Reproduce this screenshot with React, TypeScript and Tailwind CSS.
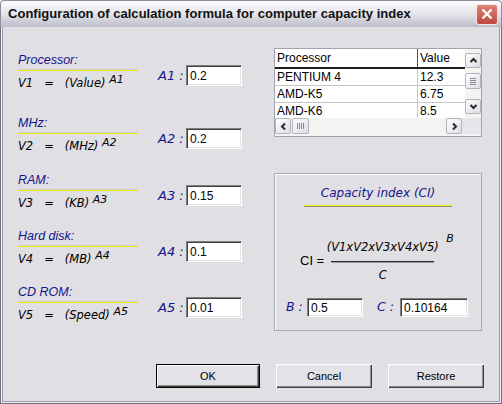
import React from 'react';

const sans = "font-['Liberation_Sans',Arial,sans-serif]";
const dv = "font-['DejaVu_Sans',Verdana,sans-serif]";

const editCls =
  'bg-white border border-t-[#7f7f7f] border-l-[#7f7f7f] border-b-white border-r-white shadow-[inset_1px_1px_0_#404040,inset_-1px_-1px_0_#e6e4dc] flex items-center pl-[3px] text-[12px] text-black ' +
  sans;

type Row = { head: string; formula: string; exp: string; value: string; mt: string };

const rows: Row[] = [
  { head: 'Processor:', formula: 'V1   =   (Value)', exp: 'A1', value: '0.2', mt: 'mt-0' },
  { head: 'MHz:', formula: 'V2   =   (MHz)', exp: 'A2', value: '0.2', mt: 'mt-[25px]' },
  { head: 'RAM:', formula: 'V3   =   (KB)', exp: 'A3', value: '0.15', mt: 'mt-[19px]' },
  { head: 'Hard disk:', formula: 'V4   =   (MB)', exp: 'A4', value: '0.1', mt: 'mt-[18px]' },
  { head: 'CD ROM:', formula: 'V5   =   (Speed)', exp: 'A5', value: '0.01', mt: 'mt-[18px]' },
];

const cpus = [
  { name: 'PENTIUM 4', value: '12.3' },
  { name: 'AMD-K5', value: '6.75' },
  { name: 'AMD-K6', value: '8.5' },
];

function Chevron({ dir }: { dir: 'up' | 'down' | 'left' | 'right' }) {
  const pts: Record<string, string> = {
    up: '1.5,6 4.5,3 7.5,6',
    down: '1.5,3 4.5,6 7.5,3',
    left: '6,1.5 3,4.5 6,7.5',
    right: '3,1.5 6,4.5 3,7.5',
  };
  return (
    <svg width="9" height="9" viewBox="0 0 9 9">
      <polyline points={pts[dir]} fill="none" stroke="#2a2a2a" strokeWidth="2" />
    </svg>
  );
}

const sbBtn =
  'flex items-center justify-center rounded-[2px] border border-[#b3b3bd] bg-gradient-to-br from-white to-[#dcdce4]';

function Button({ label, def }: { label: string; def?: boolean }) {
  return (
    <button
      className={
        'h-[24px] flex items-center justify-center bg-[#e3e2e6] text-[11px] text-black ' +
        sans +
        (def
          ? ' w-[104px] border border-black shadow-[inset_1px_1px_0_#fff,inset_-1px_-1px_0_#404040,inset_-2px_-2px_0_#8a8a8a]'
          : ' w-[96px] shadow-[inset_1px_1px_0_#fff,inset_-1px_-1px_0_#404040,inset_-2px_-2px_0_#8a8a8a]')
      }
    >
      {label}
    </button>
  );
}

export default function App() {
  return (
    <div className="w-[502px] h-[404px] flex flex-col select-none">
      {/* Title bar */}
      <div className="h-[27px] flex items-center justify-between pl-[7px] pr-[3px] border border-b-0 border-[#8d8d9c] rounded-t-[4px] bg-gradient-to-b from-[#fdfdfe] via-[#e4e4ea] to-[#bdbdca]">
        <span className={'text-[13px] font-bold text-[#111] tracking-[0.03px] ' + sans}>
          Configuration of calculation formula for computer capacity index
        </span>
        <div className="w-[22px] h-[21px] rounded-[3px] border border-[#f4e6e4] bg-gradient-to-b from-[#dd8277] to-[#c0473c] flex items-center justify-center">
          <svg width="12" height="12" viewBox="0 0 12 12">
            <path d="M1.5 1.5 L10.5 10.5 M10.5 1.5 L1.5 10.5" stroke="#fff" strokeWidth="2.3" />
          </svg>
        </div>
      </div>

      {/* Frame */}
      <div className="flex-1 flex flex-col border border-t-0 border-[#6f6f80] px-px pb-px bg-[#f0f0f4]">
        <div className="flex-1 flex flex-col border border-t-0 border-[#9c9cab] bg-[#e0dfe3] pt-[21px] px-[15px]">
          <div className="flex">
            {/* Left column */}
            <div className="w-[224px] mt-[4px] flex flex-col">
              {rows.map((r) => (
                <div key={r.exp} className={'flex items-start h-[38px] ' + r.mt}>
                  <div className="w-[120px] flex flex-col">
                    <div className={'h-[16px] leading-[16px] italic text-[12.5px] text-[#14148a] ' + sans}>
                      {r.head}
                    </div>
                    <div className="mt-px h-[2px] border-t border-[#cfcfcf] bg-[#f2f200] box-border" />
                    <div className={'mt-[5px] h-[14px] leading-[14px] italic text-[11.5px] text-black whitespace-pre ' + dv}>
                      {r.formula}{' '}
                      <span className="relative -top-[4px] text-[11px]">{r.exp}</span>
                    </div>
                  </div>
                  <div className="ml-[20px] mt-[13px] flex items-center h-[21px]">
                    <span className={'w-[28px] italic text-[13px] text-[#14148a] ' + dv}>
                      {r.exp} :
                    </span>
                    <div className={'w-[56px] h-[21px] ' + editCls}>{r.value}</div>
                  </div>
                </div>
              ))}
            </div>

            {/* Right column */}
            <div className="ml-[32px] w-[208px] flex flex-col">
              {/* Table */}
              <div className="h-[89px] border border-[#a3a3ae] bg-[#f4f4f6] flex flex-col">
                <div className="flex h-[69px] bg-white">
                  <div className={'w-[190px] flex flex-col text-[12px] text-black overflow-hidden ' + sans}>
                    <div className="flex h-[20px] border-b-2 border-[#1e1e1e] shrink-0">
                      <div className="w-[143px] pl-[2px] leading-[18px] border-r border-[#505050]">Processor</div>
                      <div className="w-[47px] pl-[2px] leading-[18px]">Value</div>
                    </div>
                    {cpus.map((c) => (
                      <div key={c.name} className="flex h-[17px] border-b border-[#c6c6c6] shrink-0">
                        <div className="w-[143px] pl-[2px] leading-[17px] border-r border-[#c6c6c6]">{c.name}</div>
                        <div className="w-[47px] pl-[2px] leading-[17px]">{c.value}</div>
                      </div>
                    ))}
                  </div>
                  <div className="w-[16px] flex flex-col bg-[#f3f3f1] py-[4px]">
                    <div className={'h-[15px] ' + sbBtn}>
                      <Chevron dir="up" />
                    </div>
                    <div className={'mt-[5px] h-[16px] ' + sbBtn}>
                      <div className="flex flex-col gap-px">
                        <div className="w-[6px] h-px bg-[#8a8a94]" />
                        <div className="w-[6px] h-px bg-[#8a8a94]" />
                        <div className="w-[6px] h-px bg-[#8a8a94]" />
                        <div className="w-[6px] h-px bg-[#8a8a94]" />
                      </div>
                    </div>
                    <div className="flex-1" />
                    <div className={'h-[15px] ' + sbBtn}>
                      <Chevron dir="down" />
                    </div>
                  </div>
                </div>
                <div className="flex h-[16px] bg-[#f3f3f1]">
                  <div className="w-[187px] flex">
                    <div className={'w-[16px] h-[16px] ' + sbBtn}>
                      <Chevron dir="left" />
                    </div>
                    <div className={'ml-px w-[17px] h-[16px] ' + sbBtn}>
                      <div className="flex gap-px">
                        <div className="w-px h-[6px] bg-[#8a8a94]" />
                        <div className="w-px h-[6px] bg-[#8a8a94]" />
                        <div className="w-px h-[6px] bg-[#8a8a94]" />
                        <div className="w-px h-[6px] bg-[#8a8a94]" />
                      </div>
                    </div>
                    <div className="flex-1" />
                    <div className={'w-[16px] h-[16px] ' + sbBtn}>
                      <Chevron dir="right" />
                    </div>
                  </div>
                  <div className="flex-1 bg-[#e6e5e9]" />
                </div>
              </div>

              {/* Capacity index group */}
              <div className="mt-[36px] h-[158px] border border-[#a9a9b3] shadow-[inset_1px_1px_0_#fff] flex flex-col">
                <div className={'pt-[11px] h-[27px] leading-[16px] text-center italic text-[12px] text-[#14148a] ' + dv}>
                  <span className="leading-[16px]">Capacity index (CI)</span>
                </div>
                <div className="mt-[4px] mx-auto w-[148px] h-[2px] bg-[#f2f200] border-b border-[#8c8c8c] box-border" />
                <div className="mt-[33px] pl-[25px] flex items-center">
                  <span className={'text-[13px] text-black ' + sans}>CI =</span>
                  <div className="ml-[7px] w-[103px] flex flex-col items-center">
                    <div className={'relative h-[14px] leading-[14px] italic text-[11.5px] text-black whitespace-nowrap ' + dv}>
                      (V1xV2xV3xV4xV5)
                      <span className="absolute -right-[15px] -top-[8px] text-[11px]">B</span>
                    </div>
                    <div className="mt-[7px] w-full h-[2px] bg-[#2a2a2a] border-b border-[#9a9a9a] box-border" />
                    <div className={'mt-[5px] h-[14px] leading-[14px] italic text-[11.5px] text-black ' + dv}>C</div>
                  </div>
                </div>
                <div className="mt-[16px] pl-[11px] flex items-center h-[19px]">
                  <span className={'w-[21px] italic text-[12.5px] text-[#14148a] ' + dv}>B :</span>
                  <div className={'w-[56px] h-[19px] ' + editCls}>0.5</div>
                  <span className={'ml-[14px] w-[23px] italic text-[12.5px] text-[#14148a] ' + dv}>C :</span>
                  <div className={'w-[68px] h-[19px] ' + editCls}>0.10164</div>
                </div>
              </div>
            </div>
          </div>

          {/* Buttons */}
          <div className="mt-[33px] flex justify-end gap-[16px]">
            <Button label="OK" def />
            <Button label="Cancel" />
            <Button label="Restore" />
          </div>
        </div>
      </div>
    </div>
  );
}
